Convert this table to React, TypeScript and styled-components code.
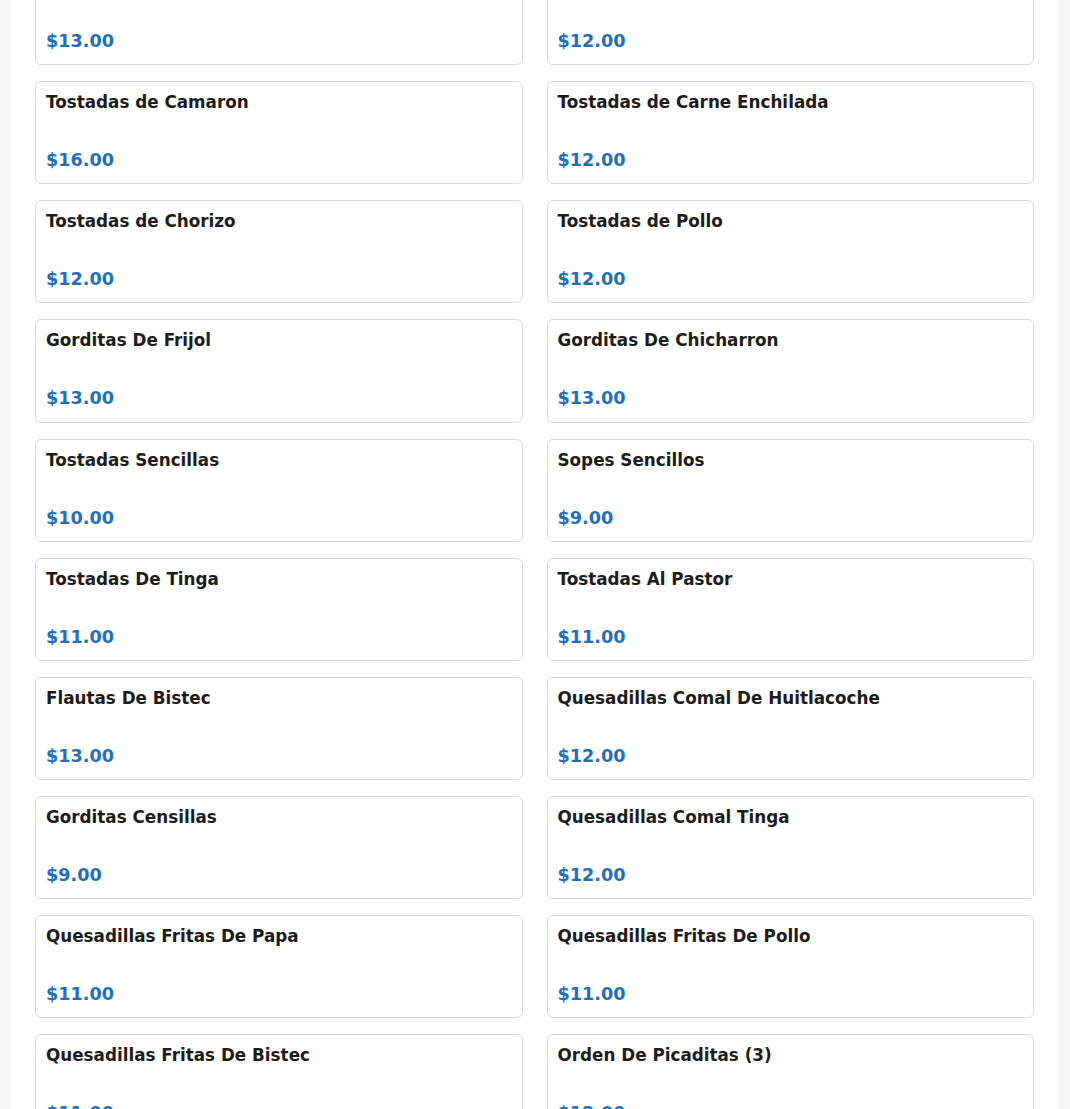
import React from 'react'
import styled, { createGlobalStyle } from 'styled-components'

const GlobalStyle = createGlobalStyle`
  html, body {
    margin: 0;
    padding: 0;
    background-color: #f7f7f7;
    font-family: "DejaVu Sans", "Liberation Sans", sans-serif;
  }
  * {
    box-sizing: border-box;
  }
`

const Page = styled.div`
  width: 1048px;
  min-height: 1109px;
  margin: 0 auto;
  background-color: #ffffff;
  padding: 0 25px 0 24px;
  overflow: hidden;
`

const Grid = styled.div`
  display: grid;
  grid-template-columns: 1fr 1fr;
  column-gap: 24px;
  row-gap: 16px;
  margin-top: -38px;
`

const Card = styled.div`
  display: flex;
  flex-direction: column;
  border: 1px solid #dcdcdc;
  border-radius: 6px;
  padding: 8px 10px 10.125px;
  background-color: #ffffff;
`

const Name = styled.div`
  font-size: 16.8px;
  line-height: 25px;
  font-weight: bold;
  color: #1c1c1c;
`

const Price = styled.div`
  margin-top: 32px;
  font-size: 17.6px;
  line-height: 26px;
  font-weight: bold;
  color: #1e6fbe;
`

interface Item {
  name: string
  price: number
}

const items: Item[] = [
  { name: 'Gorditas De Bistec', price: 13 },
  { name: 'Tostadas de Pata', price: 12 },
  { name: 'Tostadas de Camaron', price: 16 },
  { name: 'Tostadas de Carne Enchilada', price: 12 },
  { name: 'Tostadas de Chorizo', price: 12 },
  { name: 'Tostadas de Pollo', price: 12 },
  { name: 'Gorditas De Frijol', price: 13 },
  { name: 'Gorditas De Chicharron', price: 13 },
  { name: 'Tostadas Sencillas', price: 10 },
  { name: 'Sopes Sencillos', price: 9 },
  { name: 'Tostadas De Tinga', price: 11 },
  { name: 'Tostadas Al Pastor', price: 11 },
  { name: 'Flautas De Bistec', price: 13 },
  { name: 'Quesadillas Comal De Huitlacoche', price: 12 },
  { name: 'Gorditas Censillas', price: 9 },
  { name: 'Quesadillas Comal Tinga', price: 12 },
  { name: 'Quesadillas Fritas De Papa', price: 11 },
  { name: 'Quesadillas Fritas De Pollo', price: 11 },
  { name: 'Quesadillas Fritas De Bistec', price: 11 },
  { name: 'Orden De Picaditas (3)', price: 12 },
]

const App = () => {
  return (
    <>
      <GlobalStyle />
      <Page>
        <Grid>
          {items.map((item, index) => (
            <Card key={index}>
              <Name>{item.name}</Name>
              <Price>${item.price.toFixed(2)}</Price>
            </Card>
          ))}
        </Grid>
      </Page>
    </>
  )
}

export default App
